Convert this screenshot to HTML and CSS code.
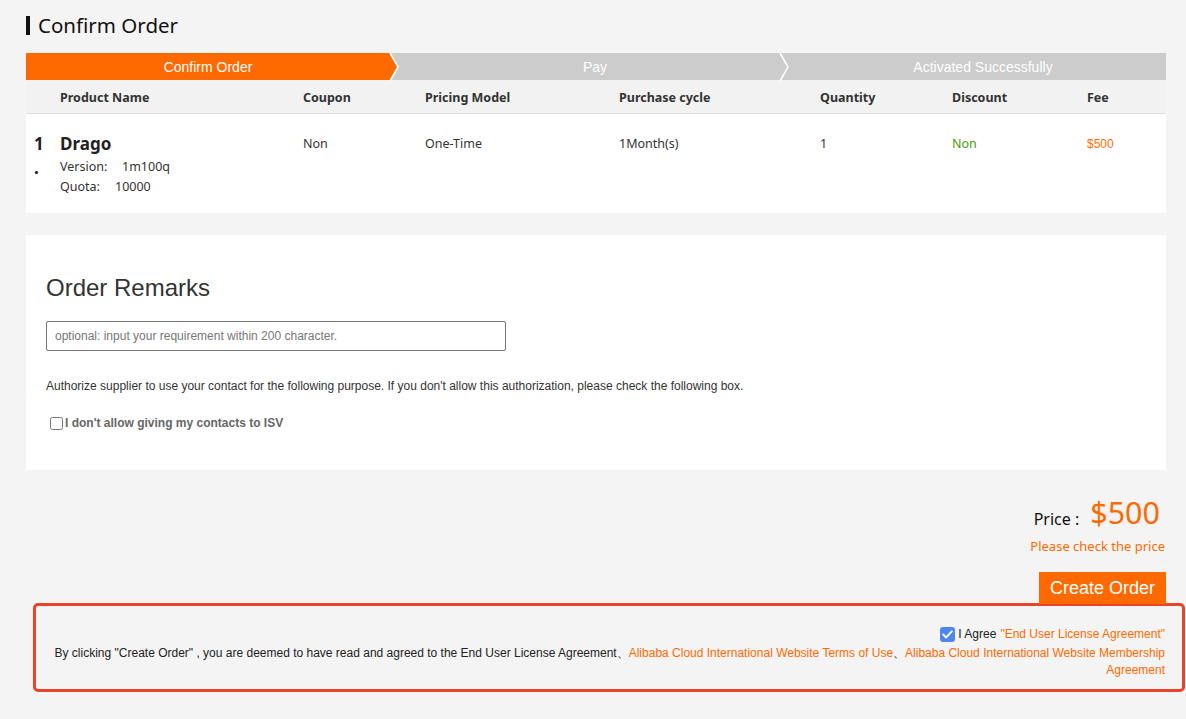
FILE: index.html
```html
<!DOCTYPE html>
<html lang="en">
<head>
<meta charset="utf-8">
<title>Confirm Order</title>
<link rel="stylesheet" href="styles.css">
</head>
<body>
<div class="page">
  <h1 class="title">Confirm Order</h1>

  <div class="steps">
    <div class="step step-active step-1">Confirm Order</div>
    <div class="step step-2">Pay</div>
    <div class="step step-3">Activated Successfully</div>
    <svg class="chev chev-1" width="12" height="28" viewBox="0 0 12 28"><path d="M1 0 L9 14 L1 28" fill="none" stroke="#fff" stroke-width="1.6"/></svg>
    <svg class="chev chev-2" width="12" height="28" viewBox="0 0 12 28"><path d="M1 0 L9 14 L1 28" fill="none" stroke="#fff" stroke-width="1.6"/></svg>
  </div>

  <div class="table">
    <div class="trow thead">
      <div></div>
      <div>Product Name</div>
      <div>Coupon</div>
      <div>Pricing Model</div>
      <div>Purchase cycle</div>
      <div>Quantity</div>
      <div>Discount</div>
      <div>Fee</div>
    </div>
    <div class="trow tbody">
      <div class="num">1<span class="dot">.</span></div>
      <div class="product">
        <div class="pname">Drago</div>
        <div class="pmeta"><span class="plabel">Version:</span><span class="pval">1m100q</span></div>
        <div class="pmeta"><span class="plabel">Quota:</span><span class="pval2">10000</span></div>
      </div>
      <div class="cell">Non</div>
      <div class="cell">One-Time</div>
      <div class="cell">1Month(s)</div>
      <div class="cell">1</div>
      <div class="cell green">Non</div>
      <div class="cell orange">$500</div>
    </div>
  </div>

  <div class="card">
    <h2 class="remarks-title">Order Remarks</h2>
    <input class="remarks-input" type="text" placeholder="optional: input your requirement within 200 character.">
    <p class="auth-text">Authorize supplier to use your contact for the following purpose. If you don't allow this authorization, please check the following box.</p>
    <label class="auth-check"><input type="checkbox" class="cb"><span>I don't allow giving my contacts to ISV</span></label>
  </div>

  <div class="summary">
    <div class="price-line"><span class="price-label">Price :</span><span class="price-val">$500</span></div>
    <div class="price-note">Please check the price</div>
    <button class="create-btn" type="button">Create Order</button>
  </div>
</div>

<div class="agree-box">
  <div class="agree-line"><span class="fake-cb"><svg width="11" height="9" viewBox="0 0 11 9"><path d="M1.2 4.6 L4.2 7.4 L9.8 1.4" fill="none" stroke="#fff" stroke-width="2" stroke-linecap="round" stroke-linejoin="round"/></svg></span><span class="dark agree-word">I Agree</span><span class="link">"End User License Agreement"</span></div>
  <div class="agree-text"><span class="dark">By clicking "Create Order" , you are deemed to have read and agreed to the End User License Agreement、</span><span class="link">Alibaba Cloud International Website Terms of Use</span><span class="dark">、</span><span class="link">Alibaba Cloud International Website Membership Agreement</span></div>
</div>
</body>
</html>
```

FILE: styles.css
```css
* { box-sizing: border-box; }
html, body { margin: 0; padding: 0; }
body {
  background: #f4f4f4;
  font-family: "Liberation Sans", Arial, sans-serif;
  color: #333;
  width: 1186px;
  height: 719px;
  overflow: hidden;
}
.page {
  margin-left: 26px;
  width: 1140px;
}
.title {
  margin: 0;
  padding: 12px 0 0 0;
  height: 53px;
  font-family: "Noto Sans", sans-serif;
  font-weight: 400;
  font-size: 20.5px;
  line-height: 26px;
  color: #111;
  display: flex;
  align-items: flex-start;
}
.title::before {
  content: "";
  display: inline-block;
  width: 4px;
  height: 19px;
  background: #111;
  margin-right: 8px;
  margin-top: 4px;
}

.steps {
  position: relative;
  display: flex;
  height: 27px;
  background: #cccccc;
}
.step {
  color: #fff;
  font-size: 14px;
  line-height: 28px;
  text-align: center;
}
.step-2 { width: 390px; padding-left: 20px; }
.step-3 { flex: 1; padding-left: 20px; }
.step-active {
  background: #ff6a00;
  clip-path: polygon(0 0, 364px 0, 372px 50%, 364px 100%, 0 100%);
  width: 372px;
  margin-right: -8px;
  padding-right: 8px;
}
.chev { position: absolute; top: -0.5px; }
.chev-1 { left: 363px; }
.chev-2 { left: 753px; }

.table { background: #fff; }
.trow {
  display: grid;
  grid-template-columns: 34px 243px 122px 194px 201px 132px 135px 1fr;
}
.thead {
  background: #f2f2f2;
  height: 34px;
  border-bottom: 1px solid #dedede;
  font-family: "Noto Sans", sans-serif;
  font-weight: 700;
  font-size: 12.5px;
  line-height: 17px;
  padding-top: 9px;
  color: #333;
}
.tbody {
  height: 99px;
  padding-top: 19px;
  font-family: "Noto Sans", sans-serif;
  font-size: 12.5px;
  color: #333;
}
.num {
  padding-left: 8px;
  font-weight: 700;
  font-size: 17px;
  line-height: 22px;
  color: #222;
}
.dot {
  display: block;
  line-height: 20px;
  font-size: 17px;
  margin-top: 3px;
}
.pname {
  font-weight: 700;
  font-size: 17px;
  line-height: 22px;
  color: #222;
}
.pmeta { line-height: 20px; font-size: 12.5px; }
.product .pname + .pmeta { margin-top: 2px; }
.plabel { display: inline-block; width: 62px; }
.pmeta .pval2 { margin-left: -7px; }
.cell { line-height: 22px; }
.green { color: #4a9a06; }
.orange { color: #ff6a00; font-family: "Liberation Sans", Arial, sans-serif; font-size: 12px; }

.card {
  margin-top: 22px;
  background: #fff;
  height: 235px;
  padding: 39px 20px 0 20px;
}
.remarks-title {
  margin: 0;
  font-weight: 400;
  font-size: 24px;
  line-height: 28px;
  color: #333;
}
.remarks-input {
  display: block;
  margin-top: 19px;
  width: 460px;
  height: 30px;
  border: 1px solid #777;
  border-radius: 2px;
  padding: 0 8px;
  font-family: "Liberation Sans", Arial, sans-serif;
  font-size: 12px;
  color: #333;
  background: #fff;
}
.remarks-input::placeholder { color: #777; }
.auth-text {
  margin: 27px 0 0 0;
  font-size: 12px;
  line-height: 16px;
  color: #333;
}
.auth-check {
  display: flex;
  align-items: center;
  margin-top: 22px;
  font-size: 12px;
  font-weight: 700;
  color: #666;
}
.cb {
  margin: 0 2px 0 4px;
  width: 13px;
  height: 13px;
}

.summary {
  display: flex;
  flex-direction: column;
  align-items: flex-end;
  padding-top: 28px;
}
.price-line {
  display: flex;
  align-items: center;
  height: 34px;
  margin-right: 6px;
}
.price-label {
  font-family: "Noto Sans", sans-serif;
  font-size: 16px;
  color: #111;
  margin-right: 11px;
  margin-top: 8px;
}
.price-val {
  font-family: "Noto Sans", sans-serif;
  font-size: 30.5px;
  line-height: 34px;
  color: #ff6a00;
  margin-bottom: 6px;
}
.price-note {
  margin-top: 5px;
  font-family: "Noto Sans", sans-serif;
  font-size: 13px;
  line-height: 18px;
  color: #ff6a00;
  margin-right: 1px;
}
.create-btn {
  margin-top: 17px;
  width: 127px;
  height: 32px;
  background: #ff6a00;
  border: none;
  color: #fff;
  font-family: "Liberation Sans", Arial, sans-serif;
  font-size: 18px;
  padding: 0;
}

.agree-box {
  margin-left: 33px;
  width: 1152px;
  height: 89px;
  border: 3px solid #ea4328;
  border-radius: 5px;
  padding: 18px 17px 0 0;
  text-align: right;
  font-size: 12px;
  line-height: 17px;
  margin-top: -1px;
}
.agree-line {
  display: flex;
  justify-content: flex-end;
  align-items: center;
  line-height: 20px;
}
.fake-cb {
  display: inline-flex;
  align-items: center;
  justify-content: center;
  width: 15px;
  height: 15px;
  background: #4c86f0;
  border-radius: 3px;
  margin-right: 3px;
}
.agree-word { margin-right: 4px; }
.dark { color: #222; }
.link { color: #ff6a00; }
.agree-text { margin-top: 1px; }
```
